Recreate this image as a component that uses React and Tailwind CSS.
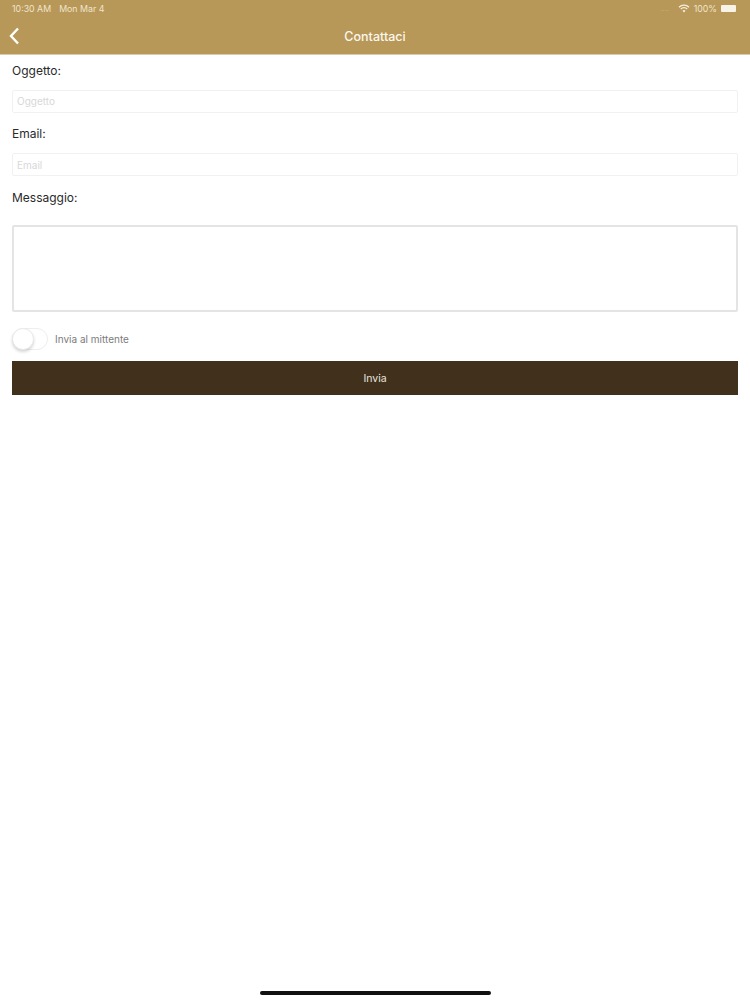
import React from "react";

const font = "font-['Inter','Liberation_Sans',sans-serif]";

const Field = ({ label, placeholder, inputClass }) => (
  <>
    <label className="block h-[20px] text-[12px] leading-[20px] text-[#2a2a2a]">{label}</label>
    <input
      readOnly
      placeholder={placeholder}
      className={`mt-[9px] block h-[23px] w-full rounded-[2px] border border-[#f1f1f1] bg-white px-[4px] text-[10px] outline-none placeholder:text-[#d8d8d8] ${inputClass}`}
    />
  </>
);

const App = () => {
  return (
    <div className={`relative flex h-[1000px] w-[750px] flex-col overflow-hidden bg-white ${font}`}>
      {/* Top bar */}
      <div className="h-[55px] shrink-0 border-b border-[#d9cba8] bg-[#b89858]">
        <div className="flex h-[17px] items-center justify-between pl-[12px] pr-[14px] text-[8.8px] text-[#efe4cc]">
          <div className="flex gap-[8px]">
            <span>10:30 AM</span>
            <span>Mon Mar 4</span>
          </div>
          <div className="flex items-center gap-[4px]">
            <span className="mr-[5px] text-[7px] leading-none text-[#c9b07c]">....</span>
            <svg width="12" height="9" viewBox="0 0 12 9" fill="none" stroke="#f5eee0" strokeWidth="1.3">
              <path d="M1 3.2a7 7 0 0 1 10 0" />
              <path d="M2.8 5a4.4 4.4 0 0 1 6.4 0" />
              <path d="M6 8.4 4.5 6.8a2.1 2.1 0 0 1 3 0Z" fill="#f5eee0" stroke="none" />
            </svg>
            <span>100%</span>
            <div className="h-[7px] w-[15px] rounded-[1px] bg-[#f7f3e8]" />
          </div>
        </div>
        <div className="relative flex h-[37px] items-center justify-center pt-[3px]">
          <svg width="12" height="18" viewBox="0 0 12 18" fill="none" stroke="#ffffff" strokeWidth="2.4" className="absolute left-[8px] top-[10px]">
            <path d="M10 1.5 3 9l7 7.5" />
          </svg>
          <span className="text-[12.5px] font-medium text-[#fbf7ee]">Contattaci</span>
        </div>
      </div>

      {/* Form */}
      <div className="flex flex-col px-[12px] pt-[6px]">
        <Field label="Oggetto:" placeholder="Oggetto" inputClass="pb-[1px]" />
        <div className="mt-[11px]">
          <Field label="Email:" placeholder="Email" inputClass="pt-[1px]" />
        </div>
        <label className="mt-[12px] block h-[20px] text-[12px] leading-[20px] text-[#2a2a2a]">Messaggio:</label>
        <textarea
          readOnly
          className="mt-[17px] block h-[87px] w-full resize-none rounded-[2px] border-2 border-[#e4e4e4] bg-white outline-none"
        />
        <div className="mt-[15px] flex h-[24px] items-center gap-[7px]">
          <div className="relative h-[22px] w-[36px] rounded-full border border-[#eeeeee] bg-white">
            <div className="absolute -left-px -top-px h-[22px] w-[22px] rounded-full border border-[#eaeaea] bg-white shadow-[0_2px_3px_rgba(0,0,0,0.16)]" />
          </div>
          <span className="text-[10px] text-[#7c7c7c]">Invia al mittente</span>
        </div>
        <button className="mt-[10px] h-[34px] w-full bg-[#40301c] pt-[1px] text-[10.5px] text-[#e8e4de]">Invia</button>
      </div>

      {/* Home indicator */}
      <div className="absolute bottom-[5px] left-[260px] h-[4px] w-[231px] rounded-full bg-[#111111]" />
    </div>
  );
};

export default App;
